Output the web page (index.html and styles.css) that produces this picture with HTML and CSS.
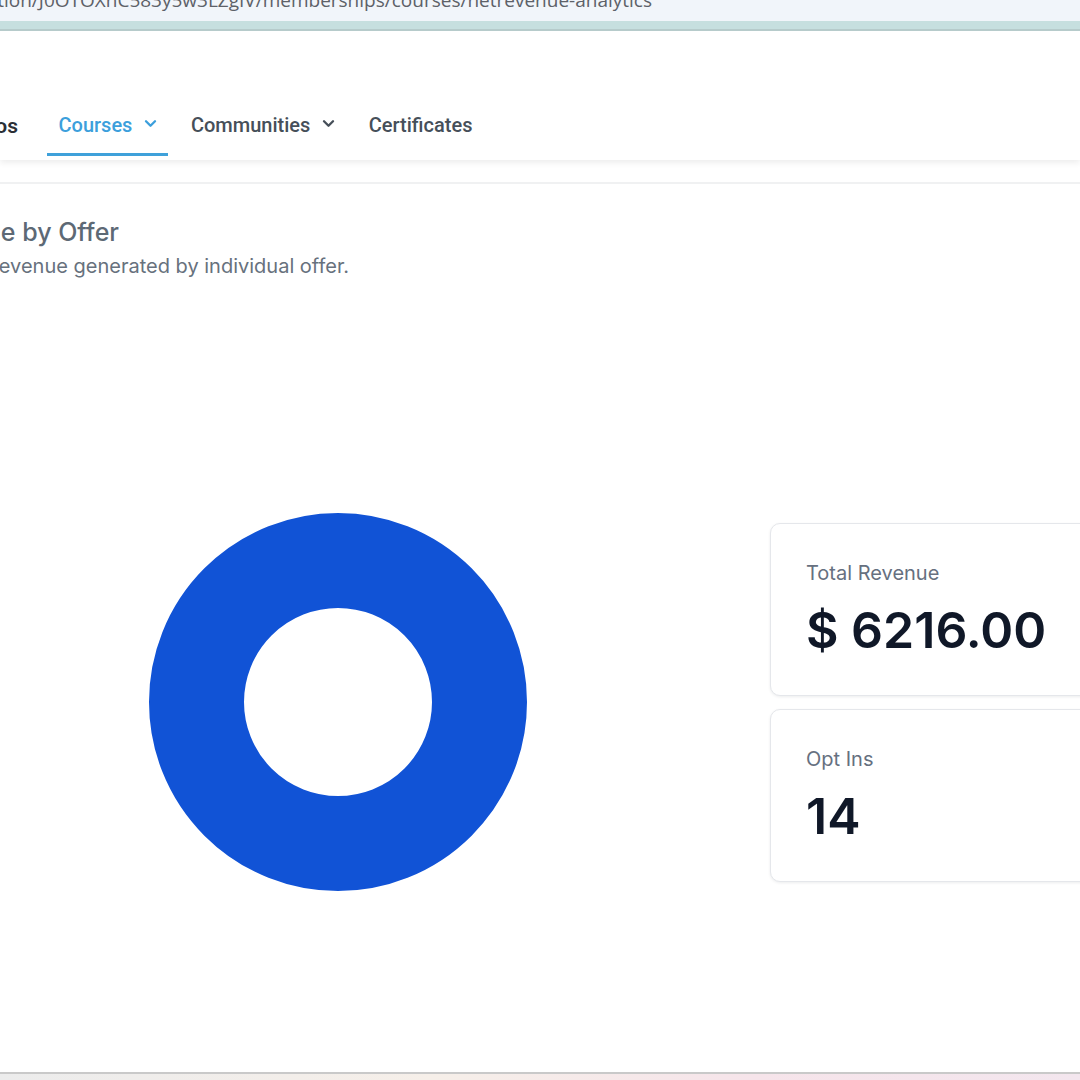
FILE: index.html
```html
<!DOCTYPE html>
<html>
<head>
<meta charset="utf-8">
<link rel="stylesheet" href="styles.css">
</head>
<body>
<div class="screen">
  <div class="urlbar">
    <div class="clip-right url-clip"><span class="url">https://app.gohighlevel.com/v2/location/J0OTOXhC583y5w3LZgIV/memberships/courses/netrevenue-analytics</span></div>
  </div>
  <div class="band"></div>
  <div class="app">
    <header class="header">
      <nav class="nav">
        <div class="clip-right brand-clip"><span class="brand">Videos</span></div>
        <div class="nav-item active">
          <span>Courses</span>
          <svg class="chev" viewBox="0 0 14 10" width="13" height="9"><path d="M2 2.5 L7 7.5 L12 2.5" fill="none" stroke="currentColor" stroke-width="2.6" stroke-linecap="round" stroke-linejoin="round"/></svg>
        </div>
        <div class="nav-item">
          <span>Communities</span>
          <svg class="chev" viewBox="0 0 14 10" width="13" height="9"><path d="M2 2.5 L7 7.5 L12 2.5" fill="none" stroke="currentColor" stroke-width="2.6" stroke-linecap="round" stroke-linejoin="round"/></svg>
        </div>
        <div class="nav-item">
          <span>Certificates</span>
        </div>
      </nav>
    </header>
    <main class="content">
      <div class="clip-right title-clip"><h2 class="title">Net Revenue by Offer</h2></div>
      <div class="clip-right sub-clip"><p class="subtitle">Net revenue generated by individual offer.</p></div>
      <div class="row">
        <div class="chart">
          <svg width="378" height="378" viewBox="0 0 378 378">
            <circle cx="189" cy="189" r="141.5" fill="none" stroke="#1153d6" stroke-width="95"/>
          </svg>
        </div>
        <div class="cards">
          <div class="card">
            <div class="label">Total Revenue</div>
            <div class="value">$ 6216.00</div>
          </div>
          <div class="card">
            <div class="label">Opt Ins</div>
            <div class="value">14</div>
          </div>
        </div>
      </div>
    </main>
  </div>
  <div class="taskbar"></div>
</div>
</body>
</html>
```
FILE: styles.css
```css
* { box-sizing: border-box; }
html, body {
  margin: 0;
  padding: 0;
  width: 1080px;
  height: 1080px;
  overflow: hidden;
  background: #ffffff;
}
.screen {
  width: 1080px;
  height: 1080px;
  display: flex;
  flex-direction: column;
  font-family: Inter, "Noto Sans", sans-serif;
}
.clip-right {
  display: flex;
  justify-content: flex-end;
  overflow: hidden;
  white-space: nowrap;
  flex-shrink: 0;
}
.urlbar {
  height: 21px;
  background: #f1f5fa;
  overflow: hidden;
}
.url-clip {
  width: 652px;
  height: 21px;
  align-items: flex-start;
}
.url {
  font-family: "Open Sans", "Noto Sans", sans-serif;
  font-size: 19px;
  line-height: 20px;
  color: #5d6168;
  margin-top: -10px;
}
.band {
  height: 10px;
  background: #c6dfdf;
  border-bottom: 2px solid #b6cbcb;
}
.app {
  flex: 1;
  display: flex;
  flex-direction: column;
  background: #fff;
  overflow: hidden;
}
.header {
  height: 129px;
  display: flex;
  align-items: flex-end;
  padding-bottom: 4px;
  box-shadow: 0 3px 6px rgba(0, 0, 0, 0.07);
  position: relative;
  z-index: 1;
}
.nav {
  display: flex;
  align-items: stretch;
  gap: 10.5px;
  font-family: Roboto, "Noto Sans", sans-serif;
  font-size: 20px;
  font-weight: 500;
  color: #464f59;
}
.brand-clip {
  width: 18px;
  height: 60px;
  align-items: center;
  margin-right: 18px;
}
.brand {
  color: #2b2f36;
  font-weight: 600;
  font-size: 21px;
}
.nav-item {
  height: 60px;
  display: flex;
  align-items: center;
  gap: 12px;
  padding: 0 11px 0 12px;
  border-bottom: 3px solid transparent;
}
.nav-item.active {
  color: #3c9fdc;
  border-bottom-color: #3fa1da;
}
.nav-item .chev { display: block; margin-top: -2px; }
.content {
  flex: 1;
  margin-top: 22px;
  border-top: 2px solid #f0f1f2;
  display: flex;
  flex-direction: column;
}
.title-clip {
  width: 119px;
  margin-top: 32px;
}
.title {
  margin: 0;
  font-size: 25px;
  line-height: 32px;
  font-weight: 500;
  color: #5d6975;
}
.sub-clip {
  width: 349px;
  margin-top: 4px;
}
.subtitle {
  margin: 0;
  font-size: 20px;
  line-height: 28px;
  color: #67717d;
}
.row {
  display: flex;
  align-items: center;
  gap: 94px;
  margin-top: 233px;
  height: 378px;
}
.chart {
  width: 676px;
  display: flex;
  justify-content: center;
  flex-shrink: 0;
}
.chart svg { display: block; }
.cards {
  display: flex;
  flex-direction: column;
  gap: 13px;
  flex-shrink: 0;
}
.card {
  width: 380px;
  height: 173px;
  border: 1px solid #e5e7eb;
  border-radius: 10px;
  box-shadow: 0 1px 3px rgba(16, 24, 40, 0.08);
  padding: 37px 35px;
  background: #fff;
}
.label {
  font-size: 20px;
  line-height: 24px;
  color: #667080;
}
.value {
  margin-top: 17px;
  font-size: 50px;
  line-height: 56px;
  font-weight: 600;
  color: #101828;
}
.taskbar {
  height: 8px;
  border-top: 2px solid #c9c9c9;
  background: linear-gradient(90deg, #ececec 0%, #f6efe9 40%, #f6e4ea 70%, #f3e6ee 100%);
}
```
